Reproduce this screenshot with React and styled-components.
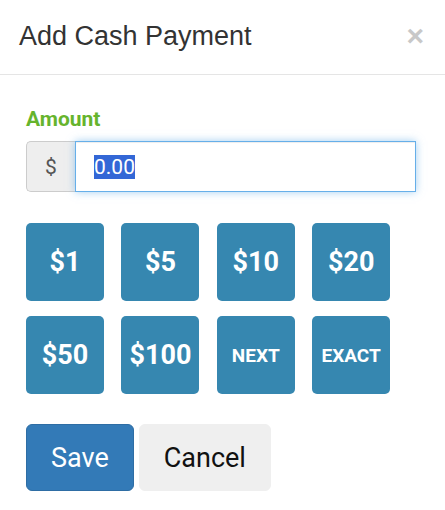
import React from 'react';
import styled, { createGlobalStyle } from 'styled-components';

const GlobalStyle = createGlobalStyle`
	html, body {
		margin: 0;
		padding: 0;
		background: #fff;
	}
	body {
		font-family: Roboto, "Liberation Sans", Arial, sans-serif;
		color: #333;
	}
	input::selection {
		background: #3367d6;
		color: #fff;
	}
`;

const Modal = styled.div`
	width: 445px;
	height: 510px;
	background: #fff;
	overflow: hidden;
`;

const Header = styled.div`
	display: flex;
	align-items: center;
	justify-content: space-between;
	height: 75px;
	padding: 0 21px 2px 19px;
	border-bottom: 1px solid #e5e5e5;
	box-sizing: border-box;
`;

const Title = styled.h4`
	margin: 0;
	font-family: "Liberation Sans", Arial, sans-serif;
	font-size: 27px;
	font-weight: normal;
	color: #333;
	line-height: 1;
`;

const Close = styled.button`
	border: 0;
	background: none;
	padding: 0;
	font-family: "Liberation Sans", Arial, sans-serif;
	font-size: 30px;
	font-weight: bold;
	line-height: 1;
	color: #c8c8c8;
	cursor: pointer;
`;

const Body = styled.div`
	padding: 32px 26px 0;
`;

const Label = styled.label`
	display: block;
	font-size: 21px;
	font-weight: bold;
	color: #66b42d;
	line-height: 24px;
	margin-bottom: 10px;
`;

const InputGroup = styled.div`
	display: flex;
	width: 390px;
	height: 51px;
`;

const Addon = styled.span`
	display: flex;
	align-items: center;
	justify-content: center;
	width: 49px;
	background: #eee;
	border: 1px solid #ccc;
	border-right: 0;
	border-radius: 5px 0 0 5px;
	font-size: 21px;
	color: #555;
	box-sizing: border-box;
`;

const Input = styled.input`
	flex: 1;
	min-width: 0;
	border: 1px solid #66afe9;
	outline: 0;
	box-shadow: inset 0 1px 1px rgba(0, 0, 0, 0.075), 0 0 8px rgba(102, 175, 233, 0.6);
	padding: 0 18px;
	font-family: Roboto, sans-serif;
	font-size: 21px;
	color: #555;
	box-sizing: border-box;
`;

const Keypad = styled.div`
	display: grid;
	grid-template-columns: repeat(4, 78px);
	grid-auto-rows: 78px;
	column-gap: 17.4px;
	row-gap: 15px;
	margin-top: 31px;
`;

const Key = styled.button`
	border: 0;
	border-radius: 5px;
	background: #3687b0;
	color: #fff;
	font-family: Roboto, sans-serif;
	font-weight: bold;
	font-size: ${p => (p.small ? '19px' : '27px')};
	padding: 0;
	cursor: pointer;
`;

const Actions = styled.div`
	display: flex;
	gap: 5px;
	margin-top: 30px;
`;

const ActionButton = styled.button`
	height: 67px;
	padding: 0 24px;
	border-radius: 6px;
	border: 1px solid ${p => (p.primary ? '#2e6da4' : '#efefef')};
	background: ${p => (p.primary ? '#337ab7' : '#efefef')};
	color: ${p => (p.primary ? '#fff' : '#111')};
	font-family: Roboto, sans-serif;
	font-size: 27px;
	cursor: pointer;
`;

const keys = [
	{ label: '$1' },
	{ label: '$5' },
	{ label: '$10' },
	{ label: '$20' },
	{ label: '$50' },
	{ label: '$100' },
	{ label: 'NEXT', small: true },
	{ label: 'EXACT', small: true },
];

export default function App() {
	const inputRef = React.useRef(null);

	React.useEffect(() => {
		if (inputRef.current) {
			inputRef.current.focus();
			inputRef.current.select();
		}
	}, []);

	return (
		<Modal>
			<GlobalStyle />
			<Header>
				<Title>Add Cash Payment</Title>
				<Close aria-label="Close">×</Close>
			</Header>
			<Body>
				<Label>Amount</Label>
				<InputGroup>
					<Addon>$</Addon>
					<Input ref={inputRef} defaultValue="0.00" />
				</InputGroup>
				<Keypad>
					{keys.map(k => (
						<Key key={k.label} small={k.small}>
							{k.label}
						</Key>
					))}
				</Keypad>
				<Actions>
					<ActionButton primary>Save</ActionButton>
					<ActionButton>Cancel</ActionButton>
				</Actions>
			</Body>
		</Modal>
	);
}
